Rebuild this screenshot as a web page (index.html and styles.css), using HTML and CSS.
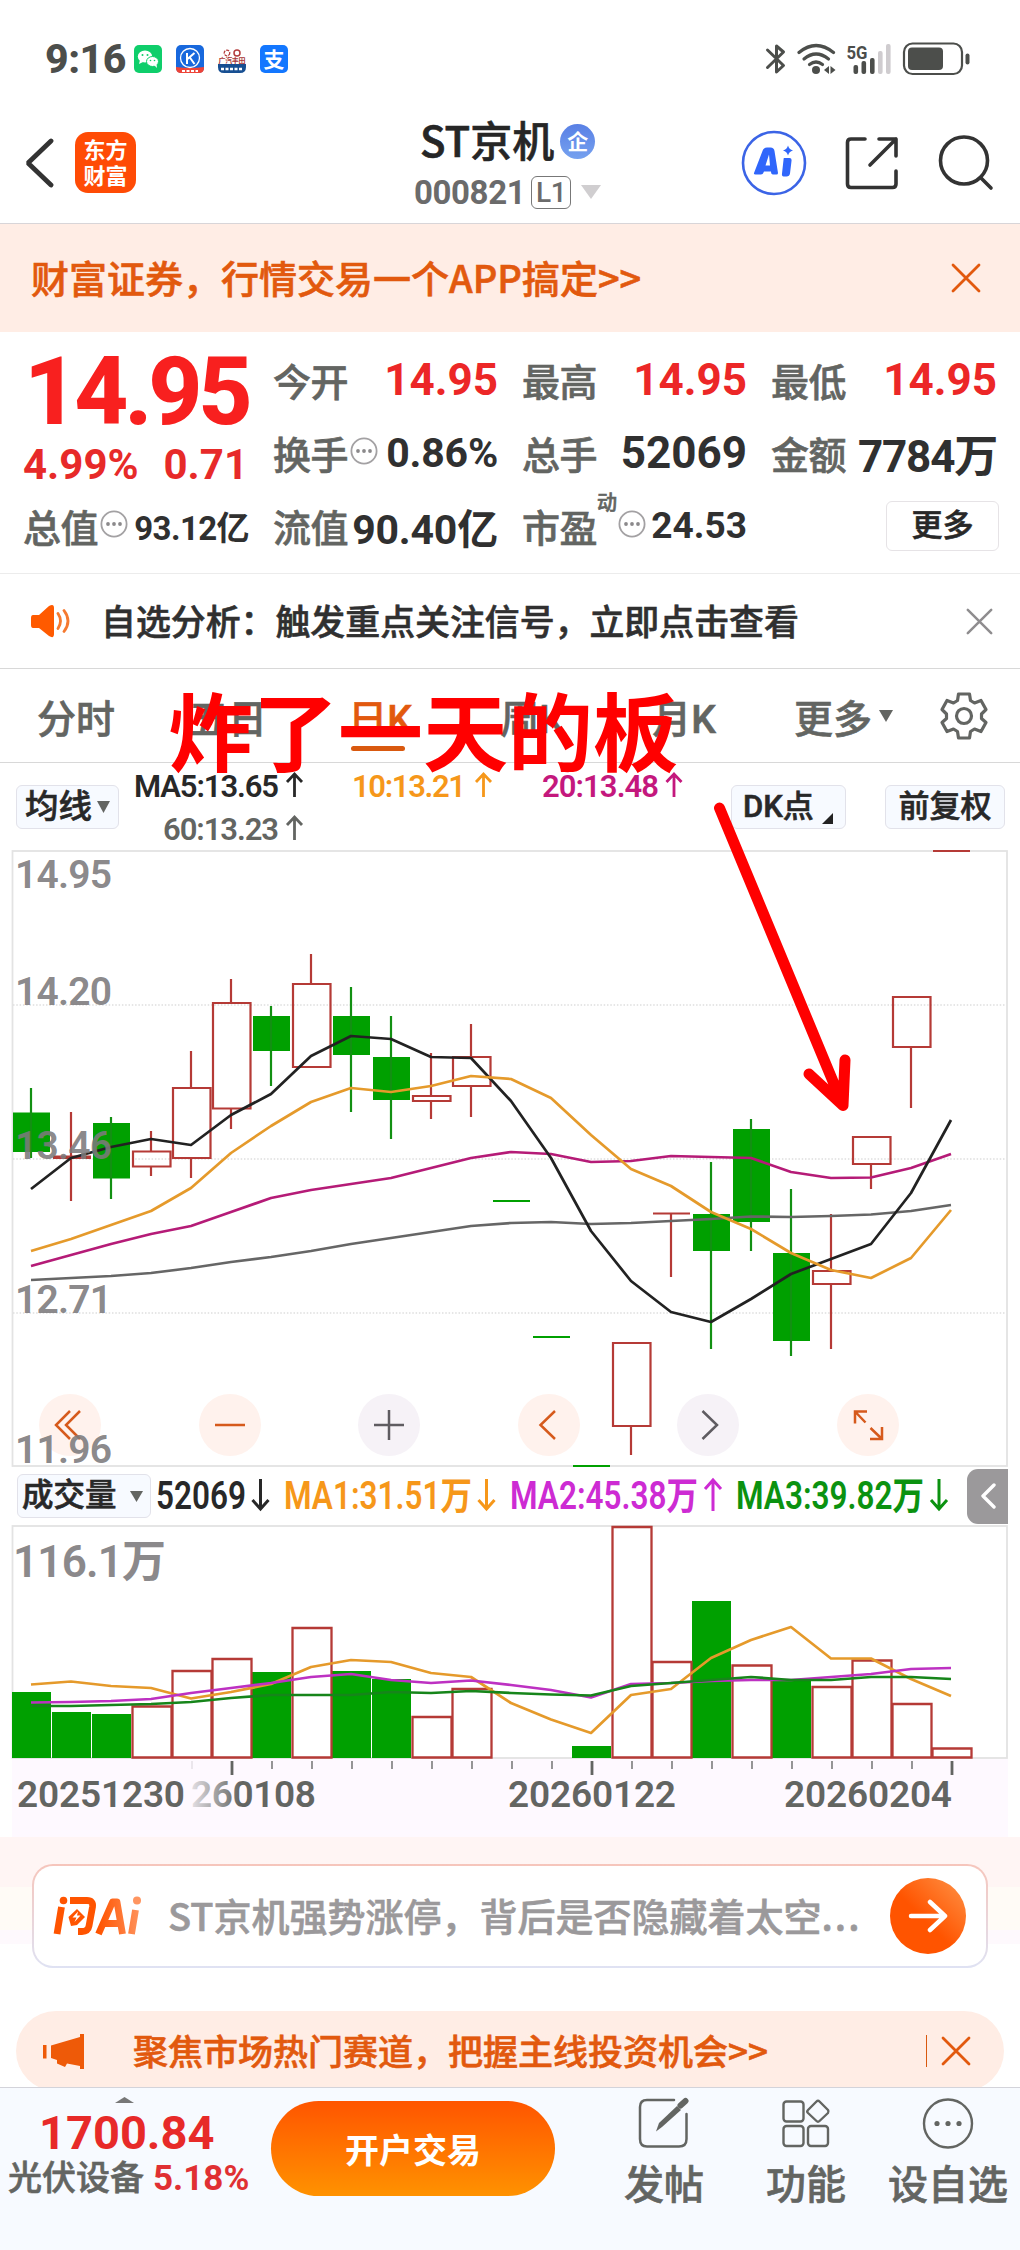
FILE: index.html
```html
<!DOCTYPE html>
<html lang="zh-CN">
<head>
    <meta charset="UTF-8">
    <meta name="viewport" content="width=device-width, initial-scale=1.0">
    <title>ST京机 000821</title>
    <link rel="stylesheet" href="styles.css">
</head>
<body>
    <svg class="defs" width="0" height="0">
        <symbol id="dots" viewBox="0 0 28 28">
            <circle cx="14" cy="14" r="12.6" fill="none" stroke="#a3a1a3" stroke-width="1.8"/>
            <circle cx="8" cy="14" r="1.9" fill="#8b898b"/>
            <circle cx="14" cy="14" r="1.9" fill="#8b898b"/>
            <circle cx="20" cy="14" r="1.9" fill="#8b898b"/>
        </symbol>
        <symbol id="close" viewBox="0 0 30 30">
            <path d="M2 2L28 28M28 2L2 28" fill="none" stroke="currentColor" stroke-width="2.8" stroke-linecap="round"/>
        </symbol>
    </svg>

    <div class="status-bar">
        <span class="time">9:16</span>
        <svg class="apps" width="154" height="28" viewBox="134 45 154 28">
            <rect x="134" y="45" width="28" height="28" rx="5" fill="#0fce6b"/>
            <ellipse cx="145" cy="56.500" rx="7.200" ry="6" fill="#fff"/>
            <path d="M140 60l-1 4 4-2z" fill="#fff"/>
            <ellipse cx="152.500" cy="61.500" rx="6" ry="5" fill="#fff" stroke="#0fce6b" stroke-width="1"/>
            <path d="M154 65l3 3-.5-4z" fill="#fff"/>
            <g fill="#0fce6b"><circle cx="142.500" cy="55" r="1"/><circle cx="147.500" cy="55" r="1"/><circle cx="150.500" cy="60.500" r=".8"/><circle cx="154.500" cy="60.500" r=".8"/></g>
            <rect x="176" y="45" width="28" height="28" rx="5" fill="#1768dd"/>
            <path d="M176 67q14 2 28 0v1q0 5-5 5h-18q-5 0-5-5z" fill="#ee4438"/>
            <circle cx="190" cy="58" r="9.500" fill="none" stroke="#fff" stroke-width="1.300"/>
            <path d="M187 53v11M194.500 53l-7 6M189.500 57l5 7" fill="none" stroke="#fff" stroke-width="2"/>
            <path d="M182 71h16" stroke="#fff" stroke-width="2" stroke-dasharray="3 1.500"/>
            <path d="M218 64h28v3q0 6-6 6h-16q-6 0-6-6z" fill="#174f92"/>
            <path d="M221 69h21" stroke="#fff" stroke-width="2.500" stroke-dasharray="3 1.500"/>
            <circle cx="227" cy="53" r="2.800" fill="none" stroke="#b33b3b" stroke-width="1.300" stroke-dasharray="3 1"/>
            <circle cx="237" cy="53" r="3" fill="none" stroke="#b33b3b" stroke-width="1.500"/>
            <text x="218.500" y="62.500" class="app-text" fill="#a83434" textLength="27" font-size="7">广汽丰田</text>
            <rect x="260" y="45" width="28" height="28" rx="5" fill="#1377ff"/>
            <text x="274" y="67" class="app-text" fill="#fff" text-anchor="middle" font-size="21">支</text>
        </svg>
        <svg class="signals" width="206" height="34" viewBox="765 42 206 34">
            <path d="M767.500 50L783.500 65.500 776.500 72V46L783.500 52 767.500 67.500" fill="none" stroke="#4c4e4b" stroke-width="3" stroke-linejoin="round" stroke-linecap="round"/>
            <g fill="none" stroke="#4c4e4b" stroke-width="3.200" stroke-linecap="round">
                <path d="M799 52.500Q816 38.500 833.500 52.500"/>
                <path d="M804 59Q816 49 828.500 59"/>
                <path d="M809.500 64.500Q816 59.500 822.500 64.500"/>
            </g>
            <circle cx="816" cy="70" r="4" fill="#4c4e4b"/>
            <path d="M829 66v8l-5-4zM830.500 66l5 4-5 4z" fill="#4c4e4b"/>
            <text x="846.500" y="59" class="net" textLength="21" lengthAdjust="spacingAndGlyphs">5G</text>
            <g fill="#4c4e4b">
                <rect x="853.500" y="65" width="4.600" height="9" rx="2"/>
                <rect x="861.500" y="61" width="4.600" height="13" rx="2"/>
                <rect x="870" y="58" width="4.600" height="16" rx="2"/>
            </g>
            <g fill="#cfcccf">
                <rect x="878" y="51" width="4.600" height="23" rx="2"/>
                <rect x="886" y="44" width="4.600" height="30" rx="2"/>
            </g>
            <rect x="904" y="43.500" width="58" height="30.500" rx="8.500" fill="none" stroke="#4c4e4b" stroke-width="2.200"/>
            <rect x="908" y="47.500" width="35" height="22.500" rx="4" fill="#4c4e4b"/>
            <rect x="965.500" y="53.500" width="4" height="11" rx="2" fill="#4c4e4b"/>
        </svg>
    </div>

    <header class="header">
        <div class="header-left">
            <svg width="30" height="50" viewBox="0 0 30 50"><path d="M27 3L4 25 27 47" fill="none" stroke="#333" stroke-width="4.800" stroke-linecap="round" stroke-linejoin="bevel"/></svg>
            <div class="logo">东方<br>财富</div>
        </div>
        <div class="header-title">
            <div class="name">ST京机<span class="badge">企</span></div>
            <div class="code">000821<span class="level">L1</span>
                <svg width="20" height="14" viewBox="0 0 20 14"><path d="M0 0h20L10 14z" fill="#d0ced0"/></svg>
            </div>
        </div>
        <div class="header-icons">
            <svg width="66" height="66" viewBox="741.500 129.500 66 66">
                <circle cx="774.500" cy="162.500" r="31" fill="none" stroke="#3b64e6" stroke-width="2.600"/>
                <path fill="#3066fb" fill-rule="evenodd" d="M754.500 172.500L763 150.500Q764 147 767.500 147H771Q774.500 147 775 150.500L778.500 172.500Q778.500 174 777 174H773.500Q771.500 174 771.500 171H764.500Q763.500 174 761.500 174H756Q754 174 754.500 172.500zM769.500 154L766 165H770.500zM784.500 157.500H790Q792.500 157.500 792 160.500L790.500 173Q790 176 787 176H784Q782 176 782.500 173L784 159.500Q784 157.500 784.500 157.500z"/>
                <path d="M788.500 145q1 4 5 5-4 1-5 5-1-4-5-5 4-1 5-5z" fill="#3066fb"/>
            </svg>
            <svg width="56" height="56" viewBox="845 134 56 56" fill="none" stroke="#333" stroke-width="3.600" stroke-linecap="round" stroke-linejoin="round">
                <path d="M866 138H852Q848.500 138 848.500 141.500V183Q848.500 186.500 852 186.500H893.500Q897 186.500 897 183V170"/>
                <path d="M880 138H897V155M897 138L871 164"/>
            </svg>
            <svg width="58" height="58" viewBox="938 133 58 58" fill="none" stroke="#333" stroke-width="3.600" stroke-linecap="round">
                <circle cx="965" cy="159.500" r="23.500"/>
                <path d="M982 177L992 187"/>
            </svg>
        </div>
    </header>

    <div class="promo">
        <span>财富证券，行情交易一个APP搞定&gt;&gt;</span>
        <svg width="30" height="30"><use href="#close"/></svg>
    </div>

    <section class="quote">
        <div class="quote-main">
            <div class="price">14.95</div>
            <div class="change"><span>4.99%</span><span>0.71</span></div>
            <div class="cell"><label>总值</label><svg width="28" height="28"><use href="#dots"/></svg><b class="xs">93.12亿</b></div>
        </div>
        <div class="quote-col">
            <div class="cell"><label>今开</label><b class="up">14.95</b></div>
            <div class="cell"><label>换手</label><svg width="28" height="28"><use href="#dots"/></svg><b class="md">0.86%</b></div>
            <div class="cell"><label>流值</label><b class="md">90.40亿</b></div>
        </div>
        <div class="quote-col">
            <div class="cell"><label>最高</label><b class="up">14.95</b></div>
            <div class="cell"><label>总手</label><b>52069</b></div>
            <div class="cell"><label>市盈<sup>动</sup></label><svg width="28" height="28"><use href="#dots"/></svg><b class="sm">24.53</b></div>
        </div>
        <div class="quote-col">
            <div class="cell"><label>最低</label><b class="up">14.95</b></div>
            <div class="cell"><label>金额</label><b class="amount">7784万</b></div>
            <div class="cell"><button class="more-btn">更多</button></div>
        </div>
    </section>

    <div class="notice">
        <svg width="40" height="34" viewBox="30 603 40 34">
            <path d="M33 614H39L49 605Q54 602 54 607V633Q54 638 49 635L39 627H33Q31 627 31 624V617Q31 614 33 614z" fill="#ff5a00"/>
            <path d="M58 612.500Q63 620 58 627.500M64 609.500Q72 620 64 630.500" fill="none" stroke="#f5792f" stroke-width="2.800" stroke-linecap="round"/>
        </svg>
        <span>自选分析：触发重点关注信号，立即点击查看</span>
        <svg class="notice-close" width="27" height="27"><use href="#close"/></svg>
    </div>

    <nav class="tabs">
        <div class="tab">分时</div>
        <div class="tab">五日</div>
        <div class="tab active">日K</div>
        <div class="tab">周K</div>
        <div class="tab">月K</div>
        <div class="tab-more">更多<svg width="14" height="12" viewBox="0 0 14 12"><path d="M0 0h14L7 12z" fill="#636562"/></svg></div>
        <svg class="gear" width="50" height="50" viewBox="-25 -25 50 50" fill="none" stroke="#636562" stroke-width="3.200" stroke-linejoin="round">
            <path d="M-5.500-22H5.500L6.500-15.500 10.500-13 17-15.500 22-6.500 17.500-2V2.500L22 6.500 17 15.500 10.500 13 6.500 15.500 5.500 22H-5.500L-6.500 15.500-10.500 13-17 15.500-22 6.500-17.500 2.500V-2L-22-6.500-17-15.500-10.500-13-6.500-15.500z"/>
            <circle r="7.500"/>
        </svg>
    </nav>

    <div class="ma-bar">
        <button class="chip ma-chip">均线<svg width="13" height="12" viewBox="0 0 13 12"><path d="M0 0h13L6.500 12z" fill="#636562"/></svg></button>
        <svg class="ma-values" width="560" height="87" viewBox="130 763 560 87">
            <g class="num">
                <text x="134" y="797" textLength="145" fill="#282828">MA5:13.65</text>
                <text x="352" y="797" textLength="114" fill="#f6971a">10:13.21</text>
                <text x="542" y="797" textLength="117" fill="#c4187d">20:13.48</text>
                <text x="163" y="840" textLength="116" fill="#636562">60:13.23</text>
            </g>
            <g fill="none" stroke-width="2.800">
                <path d="M294.500 797V775M287 782L294.500 774 302 782" stroke="#282828"/>
                <path d="M483.500 797V775M476 782L483.500 774 491 782" stroke="#f6971a"/>
                <path d="M674 797V775M666.500 782L674 774 681.500 782" stroke="#c4187d"/>
                <path d="M294.500 840V818M287 825L294.500 817 302 825" stroke="#636562"/>
            </g>
        </svg>
        <button class="chip dk-chip">DK点<svg width="11" height="11" viewBox="0 0 11 11"><path d="M11 0v11H0z" fill="#222"/></svg></button>
        <button class="chip fq-chip">前复权</button>
    </div>

    <svg class="kline" width="1020" height="618" viewBox="0 850 1020 618">
        <rect x="12.500" y="851" width="994.500" height="615" fill="none" stroke="#e3e3e3" stroke-width="1.800"/>
        <path d="M13 1005H1006M13 1159H1006M13 1313H1006" stroke="#dedede" stroke-width="1.300" stroke-dasharray="1.500 1.800"/>

        <!-- falling candles -->
        <path fill="#00a000" d="M13 1112.500h37v39.500h-37zM93 1123h37v55.500h-37zM253 1016h37v35h-37zM333 1016h37v39h-37zM373 1057h37v43h-37zM493 1200h37v2h-37zM533 1336h37v2h-37zM573 1465h37v2h-37zM693 1214h37v37h-37zM733 1129h37v93h-37zM773 1253h37v88h-37z"/>
        <path stroke="#129012" stroke-width="2.200" d="M31 1088V1158M111 1117V1199M271 1006V1086M351 987V1112M391 1016V1139M711 1162V1349M751 1119V1251M791 1189V1356"/>

        <!-- rising candles -->
        <g fill="none" stroke="#b53a36" stroke-width="2.200">
            <path d="M53 1156.500h38M653 1213.500h37M933 851h37"/>
            <path d="M53 1158h38"/>
            <path d="M133 1151.500h37.500v15h-37.500zM173 1088h37.500v70h-37.500zM213 1003h37.500v105.500h-37.500zM293 984h37.500v83h-37.500zM413 1096h37.500v5h-37.500zM453 1057h37.500v29h-37.500zM613 1343h37.500v83h-37.500zM813 1271h37.500v13h-37.500zM853 1137h37.500v27h-37.500zM893 997h37.500v50h-37.500z"/>
            <path d="M71 1112V1201M151 1131V1151M151 1167V1176M191 1051V1088M191 1158V1178M231 979V1003M231 1109V1129M311 954V984M431 1053V1096M431 1101V1119M471 1024V1057M471 1086V1117M631 1426V1455M671 1214V1277M831 1214V1271M831 1284V1349M871 1164V1189M911 1047V1108"/>
        </g>

        <!-- moving averages -->
        <g fill="none" stroke-width="2.700" stroke-linejoin="round">
            <polyline stroke="#666" points="31,1280 71,1278 111,1276 151,1273 191,1268 231,1262 271,1257 311,1251 351,1244 391,1238 431,1232 471,1226 511,1223 551,1222 591,1224 631,1223 671,1221 711,1219 751,1216.500 791,1217 831,1216 871,1214.500 911,1211 951,1205"/>
            <polyline stroke="#b51b77" points="31,1266 71,1255 111,1244 151,1234 191,1226 231,1212 271,1198 311,1190 351,1184 391,1178 431,1168 471,1158 511,1152 551,1154 591,1162 631,1161 671,1156 711,1157 751,1158 791,1172 831,1178 871,1177.500 911,1168 951,1154"/>
            <polyline stroke="#222" points="31,1189 71,1158 111,1147 151,1139 191,1145 231,1115 271,1094 311,1056 351,1036 391,1039 431,1057 471,1058 511,1101 551,1158 591,1231 631,1281 671,1312 711,1322 751,1299 791,1274 831,1259 871,1244 911,1193 951,1120"/>
            <polyline stroke="#e59a2b" points="31,1251 71,1239 111,1225 151,1211 191,1188 231,1153 271,1126 311,1102 351,1088 391,1092 431,1086 471,1076 511,1079 551,1098 591,1135 631,1169 671,1186 711,1212 751,1229 791,1253 831,1270 871,1278 911,1258 951,1210"/>
        </g>

        <!-- chart controls -->
        <g fill="#fff2ed">
            <circle cx="70" cy="1425" r="31"/><circle cx="230" cy="1425" r="31"/>
            <circle cx="549" cy="1425" r="31"/><circle cx="868" cy="1425" r="31"/>
        </g>
        <g fill="#f6f2f7"><circle cx="389" cy="1425" r="31"/><circle cx="708" cy="1425" r="31"/></g>
        <g fill="none" stroke="#d65a1c" stroke-width="2.500">
            <path d="M70 1411L56 1425 70 1439M80 1411L66 1425 80 1439M215 1425H245M555 1411L540.500 1425 555 1439"/>
            <path d="M855 1423.500V1411.500H867M855 1411.500L865.500 1422.500M870.500 1428L882 1439M882 1427V1439H870"/>
        </g>
        <path d="M374 1425H404M389 1410V1440M702.500 1411L717 1425 702.500 1439" fill="none" stroke="#5f5c61" stroke-width="2.500"/>

        <g class="axis">
            <text x="15" y="888" textLength="97">14.95</text>
            <text x="15" y="1005" textLength="97">14.20</text>
            <text x="15" y="1158.500" textLength="97">13.46</text>
            <text x="15" y="1313" textLength="97">12.71</text>
            <text x="15" y="1463" textLength="97">11.96</text>
        </g>
    </svg>

    <div class="vol-bar">
        <button class="chip vol-chip">成交量<svg width="13" height="11" viewBox="0 0 13 11"><path d="M0 0h13L6.500 11z" fill="#636562"/></svg></button>
        <svg class="vol-values" width="800" height="56" viewBox="155 1468 800 56">
            <g class="num">
                <text x="156" y="1509" textLength="90" lengthAdjust="spacingAndGlyphs" fill="#282828">52069</text>
                <text x="284" y="1509" textLength="188" lengthAdjust="spacingAndGlyphs" fill="#f6971a">MA1:31.51万</text>
                <text x="510" y="1509" textLength="188" lengthAdjust="spacingAndGlyphs" fill="#cd2bd3">MA2:45.38万</text>
                <text x="736" y="1509" textLength="188" lengthAdjust="spacingAndGlyphs" fill="#0b9210">MA3:39.82万</text>
            </g>
            <g fill="none" stroke-width="3">
                <path d="M260.500 1479V1508M252.500 1500L260.500 1509 268.500 1500" stroke="#282828"/>
                <path d="M486.500 1479V1508M478.500 1500L486.500 1509 494.500 1500" stroke="#f6971a"/>
                <path d="M713 1511V1481M705 1489L713 1480 721 1489" stroke="#cd2bd3"/>
                <path d="M939 1479V1508M931 1500L939 1509 947 1500" stroke="#0b9210"/>
            </g>
        </svg>
        <div class="drawer">
            <svg width="16" height="26" viewBox="0 0 16 26"><path d="M14 2L3 13 14 24" fill="none" stroke="#fff" stroke-width="3.400" stroke-linecap="round" stroke-linejoin="round"/></svg>
        </div>
    </div>

    <svg class="volume" width="1020" height="313" viewBox="0 1524 1020 313">
        <defs>
            <linearGradient id="fade" gradientUnits="userSpaceOnUse" x1="190" y1="0" x2="240" y2="0">
                <stop offset="0" stop-color="#636562" stop-opacity=".15"/>
                <stop offset="1" stop-color="#636562"/>
            </linearGradient>
        </defs>
        <rect x="12" y="1759" width="996" height="78" fill="#fef9ff"/>
        <rect x="12.500" y="1526" width="994.500" height="232" fill="#fff" stroke="#e3e3e3" stroke-width="1.800"/>

        <path fill="#00a000" d="M12 1692h39v66h-39zM52 1712h39v46h-39zM92 1714h39v44h-39zM252 1672h39v86h-39zM332 1671h39v87h-39zM372 1679h39v79h-39zM572 1746h39v12h-39zM692 1601h39v157h-39zM772 1680h39v78h-39z"/>
        <path fill="none" stroke="#b53a36" stroke-width="2.300" d="M132.500 1706.500h39v51h-39zM172.500 1671h39v86.500h-39zM212.500 1659h39v98.500h-39zM292.500 1628h39v129.500h-39zM412.500 1717h39v40.500h-39zM452.500 1689h39v68.500h-39zM612.500 1527h39v230.500h-39zM652.500 1662h39v95.500h-39zM732.500 1665.500h39v92h-39zM812.500 1687h39v70.500h-39zM852.500 1660.500h39v97h-39zM892.500 1704h39v53.500h-39zM932.500 1748.500h39v9h-39z"/>

        <g fill="none" stroke-width="2.700" stroke-linejoin="round">
            <polyline stroke="#e59a2b" points="31,1684.500 71,1681.500 111,1686 151,1688 191,1698.500 231,1692 271,1684 311,1667 351,1660 391,1662 431,1673 471,1677 511,1703 551,1719.500 591,1733 631,1695 671,1689 711,1658 751,1640 791,1627 831,1658.500 871,1658.500 911,1679 951,1696"/>
            <polyline stroke="#bd31c2" points="31,1702.500 71,1702 111,1701 151,1699 191,1693 231,1688 271,1683 311,1677 351,1674 391,1680 431,1683 471,1680.500 511,1685 551,1690 591,1697.500 631,1684 671,1683 711,1681 751,1680 791,1680 831,1677 871,1674 911,1669 951,1668"/>
            <polyline stroke="#16851a" points="31,1706 71,1706 111,1705 151,1704 191,1702 231,1698 271,1695 311,1695 351,1695 391,1692 431,1693 471,1691 511,1693 551,1694.500 591,1695.500 631,1686 671,1683 711,1680 751,1677 791,1680 831,1680 871,1677 911,1677 951,1679"/>
        </g>

        <path stroke="#8b898b" stroke-width="1.800" d="M272 1761v8M312 1761v8M352 1761v8M392 1761v8M432 1761v8M472 1761v8M512 1761v8M552 1761v8M632 1761v8M672 1761v8M712 1761v8M752 1761v8M792 1761v8M832 1761v8M872 1761v8M912 1761v8"/>
        <path stroke="#636562" stroke-width="2.800" d="M232 1761v14M592 1761v14M952 1761v14"/>
        <path stroke="#e6e1e8" stroke-width="1.600" d="M192 1761v8"/>

        <text class="vol-max" x="13" y="1576.500" textLength="153">116.1万</text>
        <g class="date">
            <text x="17" y="1807" textLength="168">20251230</text>
            <text x="191" y="1807" textLength="125" fill="url(#fade)">260108</text>
            <text x="508" y="1807" textLength="168">20260122</text>
            <text x="784" y="1807" textLength="168">20260204</text>
        </g>
    </svg>

    <section class="ask">
        <div class="ask-box">
            <svg width="96" height="46" viewBox="50 1893 96 46">
                <defs>
                    <linearGradient id="askFill" gradientUnits="userSpaceOnUse" x1="54" y1="0" x2="142" y2="0">
                        <stop offset=".5" stop-color="#ff5400"/>
                        <stop offset="1" stop-color="#ff9560"/>
                    </linearGradient>
                </defs>
                <g fill="none" stroke="url(#askFill)" stroke-width="6.800" stroke-linejoin="round">
                    <path d="M61.500 1907L57 1934M70 1900.500H87Q93.500 1900.500 92.500 1907L89 1926Q88 1931.500 82 1931.500H78"/>
                    <path d="M98.500 1934L112.500 1902H117L122.500 1934M103 1923.500H120M135.500 1910L131.500 1934"/>
                </g>
                <circle cx="63.500" cy="1900.500" r="3.800" fill="#ff5400"/>
                <circle cx="137" cy="1900.500" r="4" fill="#ff9560"/>
                <path d="M77 1909L85 1917 77 1925 71 1926 68.500 1917z" fill="#ff5400"/>
                <path d="M78 1911.500L72.500 1917.500H76.500L74.500 1922 80.500 1915.500H77z" fill="#fff"/>
            </svg>
            <span>ST京机强势涨停，背后是否隐藏着太空<i>...</i></span>
            <div class="send">
                <svg width="40" height="34" viewBox="0 0 40 34"><path d="M3 17H36M22 3L37 17 22 31" fill="none" stroke="#fff" stroke-width="4.500" stroke-linecap="round" stroke-linejoin="round"/></svg>
            </div>
        </div>
    </section>

    <div class="hot-wrap">
        <div class="hot">
            <svg width="44" height="36" viewBox="42 2033 44 36">
                <path d="M43 2045h3.500v13.500H43zM51 2045.500L80 2037V2034H84V2069H80V2066L67 2063.500 65 2067 57 2063.500V2060L51 2058z" fill="#ee5a08"/>
            </svg>
            <span>聚焦市场热门赛道，把握主线投资机会&gt;&gt;</span>
            <div class="hot-line"></div>
            <svg class="hot-close" width="30" height="30"><use href="#close"/></svg>
        </div>
    </div>

    <footer class="footer">
        <div class="sector">
            <svg width="19" height="6" viewBox="0 0 19 6"><path d="M0 6L9.500 0 19 6z" fill="#777"/></svg>
            <div class="sector-value">1700.84</div>
            <div class="sector-name">光伏设备<b>5.18%</b></div>
        </div>
        <button class="open-btn">开户交易</button>
        <div class="action post">
            <svg width="52" height="52" viewBox="638 2097 52 52" fill="none" stroke="#636562" stroke-width="2.500">
                <path d="M674 2100H647Q640 2100 640 2107V2139Q640 2146.500 647 2146.500H679Q686.500 2146.500 686.500 2139V2114" stroke-linecap="round"/>
                <path d="M656 2131.500L659 2123 677 2106 681 2110 662 2127z" fill="#636562" stroke="none"/>
                <path d="M680.500 2105.500L685.500 2101" stroke-width="6" stroke-linecap="round"/>
            </svg>
            <span>发帖</span>
        </div>
        <div class="action func">
            <svg width="52" height="52" viewBox="780 2097 52 52" fill="none" stroke="#636562" stroke-width="2.400" stroke-linejoin="round">
                <rect x="783.500" y="2101.500" width="20" height="20" rx="3"/>
                <rect x="783.500" y="2126" width="20" height="20" rx="3"/>
                <rect x="808" y="2126" width="20" height="20" rx="3"/>
                <path d="M816.500 2101.500Q818 2100 819.500 2101.500L828 2110Q829 2111.500 828 2113L819.500 2121Q818 2122.500 816.500 2121L808 2113Q806.500 2111.500 808 2110z"/>
            </svg>
            <span>功能</span>
        </div>
        <div class="action watch">
            <svg width="52" height="52" viewBox="922.500 2097 52 52">
                <circle cx="948.500" cy="2123.500" r="24" fill="none" stroke="#636562" stroke-width="2.400"/>
                <g fill="#636562"><circle cx="937.500" cy="2123.500" r="2.600"/><circle cx="948.500" cy="2123.500" r="2.600"/><circle cx="959.500" cy="2123.500" r="2.600"/></g>
            </svg>
            <span>设自选</span>
        </div>
    </footer>

    <div class="note">炸了一天的板</div>
    <svg class="note-arrow" width="160" height="330" viewBox="700 795 160 330" fill="none" stroke="#f00" stroke-width="11" stroke-linecap="round" stroke-linejoin="round">
        <path d="M719.500 808L843 1105.500M809 1074L843 1105.500 845 1060"/>
    </svg>
</body>
</html>
```
FILE: styles.css
```css
* {
    box-sizing: border-box;
}

body {
    margin: 0;
    width: 1020px;
    height: 2250px;
    position: relative;
    overflow: hidden;
    background-color: #fff;
    color: #333;
    font-family: Roboto, "Noto Sans CJK SC", sans-serif;
    font-weight: 500;
    white-space: nowrap;
}

svg {
    display: block;
    flex: none;
}

.defs {
    position: absolute;
}

button {
    font-family: inherit;
    font-weight: 500;
    padding: 0;
    border: none;
}

/* slightly heavier chinese text */
.name,
.promo span,
.cell label,
.more-btn,
.notice span,
.tabs,
.chip,
.ask-box span,
.hot span,
.sector-name,
.action span {
    -webkit-text-stroke: 0.6px currentColor;
}

/* status bar */
.status-bar {
    display: flex;
    align-items: center;
    height: 118px;
    padding: 0 49px 0 45px;
}

.time {
    width: 89px;
    font-size: 41px;
    font-weight: 800;
    letter-spacing: -0.5px;
    color: #4c4e4b;
}

.signals {
    margin-left: auto;
}

.app-text {
    font-family: "Noto Sans CJK SC", sans-serif;
    font-weight: 700;
}

.net {
    font-size: 19px;
    font-weight: 700;
    fill: #4c4e4b;
}

/* header */
.header {
    display: grid;
    grid-template-columns: 400px 215px 405px;
    height: 106px;
    border-bottom: 1px solid #d8d5d8;
}

.header-left {
    display: flex;
    align-items: center;
    height: 89px;
    padding-left: 24px;
    gap: 21px;
}

.logo {
    width: 61px;
    height: 61px;
    padding-top: 3px;
    border-radius: 13px;
    background-color: #ff4b05;
    color: #fff;
    font-family: "Noto Sans CJK SC", sans-serif;
    font-size: 22px;
    font-weight: 700;
    line-height: 26px;
    text-align: center;
}

.name {
    display: flex;
    align-items: center;
    height: 47px;
    padding-left: 20px;
    font-family: "Noto Sans CJK SC", sans-serif;
    font-size: 42px;
    line-height: 40px;
    padding-bottom: 6px;
    color: #262626;
}

.badge {
    width: 35px;
    height: 35px;
    margin-left: 6px;
    margin-top: 6px;
    border-radius: 50%;
    background: linear-gradient(#5980e5, #76a1ef);
    color: #fff;
    font-size: 21px;
    font-weight: 700;
    line-height: 33px;
    text-align: center;
    -webkit-text-stroke: 0;
}

.code {
    display: flex;
    align-items: center;
    height: 54px;
    margin-top: 1px;
    padding: 0 0 2px 14px;
    font-size: 33px;
    font-weight: 700;
    letter-spacing: -0.4px;
    color: #6b6b6b;
}

.level {
    width: 40px;
    height: 33px;
    margin: 0 10px 0 6px;
    border: 1.500px solid #777;
    border-radius: 6px;
    font-size: 28px;
    font-weight: 500;
    line-height: 31px;
    text-align: center;
}

.header-icons {
    display: flex;
    align-items: center;
    height: 89px;
    padding-left: 126px;
    gap: 37px;
}

/* promo banner */
.promo {
    display: flex;
    align-items: center;
    justify-content: space-between;
    height: 108px;
    padding: 0 39px 0 31px;
    background-color: #ffede5;
    color: #e2590e;
    font-family: "Noto Sans CJK SC", sans-serif;
    font-size: 38px;
}

.promo span {
    margin-top: -4px;
}

/* quote */
.quote {
    display: grid;
    grid-template-columns: 226px 225px 225px 226px;
    column-gap: 24px;
    height: 242px;
    padding: 11px 0 0 23px;
    border-bottom: 1px solid #ececec;
}

.price {
    height: 95px;
    padding-left: 1px;
    font-size: 94px;
    font-weight: 800;
    line-height: 99px;
    letter-spacing: -4px;
    color: #f8201f;
}

.change {
    display: flex;
    justify-content: space-between;
    height: 51px;
    padding-right: 1px;
    font-size: 42px;
    font-weight: 700;
    line-height: 53px;
    color: #e72a29;
}

.cell {
    display: flex;
    align-items: center;
    height: 73px;
}

.cell label {
    position: relative;
    font-size: 38px;
    color: #636562;
    letter-spacing: -0.5px;
}

.cell sup {
    position: absolute;
    left: 75px;
    top: -5px;
    font-size: 20px;
    line-height: 20px;
}

.cell svg {
    margin-top: -4px;
    margin-left: 2px;
}

.cell b {
    margin-left: auto;
    font-size: 44px;
    font-weight: 700;
    color: #303030;
}

.cell b.up {
    color: #ec2727;
}

.cell b.md {
    font-size: 41px;
    letter-spacing: -0.2px;
}

.cell b.sm {
    font-size: 37px;
}

.cell b.xs {
    font-size: 33px;
    letter-spacing: -0.6px;
}

.cell b.amount {
    letter-spacing: -1.200px;
}

.quote-col:nth-child(3) .cell svg {
    margin-left: 21px;
}

.more-btn {
    width: 113px;
    height: 50px;
    margin-left: auto;
    margin-right: -2px;
    border: 1.500px solid #e6e3e6;
    border-radius: 6px;
    background-color: #fff;
    color: #282828;
    font-size: 31px;
    line-height: 46px;
}

/* notice */
.notice {
    display: flex;
    align-items: center;
    height: 95px;
    padding: 0 27px 0 30px;
    border-bottom: 1px solid #d8d8d8;
    font-size: 34.900px;
    color: #303030;
}

.notice span {
    margin-left: 31px;
    margin-top: -3px;
}

.notice-close {
    margin-left: auto;
    color: #8f8d8f;
}

/* period tabs */
.tabs {
    display: flex;
    align-items: center;
    height: 94px;
    border-bottom: 1px solid #d8d8d8;
    font-size: 39px;
    color: #636562;
}

.tab {
    position: relative;
    width: 152px;
    text-align: center;
}

.tab.active {
    color: #e2590e;
}

.tab.active::after {
    content: "";
    position: absolute;
    left: 47px;
    top: 58px;
    width: 54px;
    height: 5px;
    border-radius: 3px;
    background-color: #d9590f;
}

.tab-more {
    display: flex;
    align-items: center;
    gap: 7px;
    margin-left: 34px;
}

.gear {
    margin-left: 46px;
}

/* moving average legend */
.chip {
    display: flex;
    align-items: center;
    height: 44px;
    border: 1.500px solid #e2e2ea;
    border-radius: 6px;
    background-color: #f7faff;
    color: #282828;
    font-size: 31px;
    line-height: 40px;
}

.ma-bar {
    display: flex;
    align-items: center;
    height: 87px;
    padding-left: 16px;
}

.ma-chip {
    width: 103px;
    padding-left: 8px;
    font-size: 33.500px;
    gap: 5px;
}

.ma-values {
    margin-left: 11px;
}

.num {
    font-size: 31px;
    font-weight: 600;
}

.dk-chip {
    width: 115px;
    margin-left: 41px;
    padding-left: 11px;
    gap: 8px;
}

.dk-chip svg {
    align-self: flex-end;
    margin-bottom: 4px;
}

.fq-chip {
    width: 120px;
    margin-left: 39px;
    justify-content: center;
}

/* charts */
.axis {
    font-size: 39px;
    font-weight: 600;
    fill: #7c7a7c;
    fill-opacity: 0.9;
}

.vol-bar {
    display: flex;
    align-items: center;
    height: 56px;
    padding: 0 12px 0 17px;
}

.vol-chip {
    width: 134px;
    padding-left: 4px;
    font-size: 31.500px;
    gap: 13px;
}

.vol-values {
    margin-left: 4px;
}

.vol-values .num {
    font-size: 38px;
}

.drawer {
    display: flex;
    align-items: center;
    width: 41px;
    height: 55px;
    margin-left: auto;
    padding-left: 13px;
    border-radius: 11px 0 0 11px;
    background-color: #9b999b;
}

.vol-max {
    font-size: 44px;
    font-weight: 600;
    fill: #8b898b;
}

.date {
    font-size: 37px;
    font-weight: 600;
    fill: #636562;
}

/* ask box */
.ask {
    height: 174px;
    padding: 27px 32px 0;
    background: linear-gradient(#fff5f4 50px, #fffbf6 50px, #fffbf6 93px, #fef9fd 93px, #fef9fd 107px, #fff 107px);
}

.ask-box {
    display: flex;
    align-items: center;
    height: 104px;
    padding: 0 20px 0 16px;
    border: 2px solid transparent;
    border-radius: 21px;
    background: linear-gradient(#fff, #fff) padding-box, linear-gradient(#f6c5bb, #dfe2f3) border-box;
    color: #9b999b;
    font-family: "Noto Sans CJK SC", sans-serif;
    font-size: 38px;
}

.ask-box span {
    margin-left: 22px;
    margin-top: -4px;
}

.ask-box i {
    font-style: normal;
    letter-spacing: 2px;
}

.send {
    display: flex;
    align-items: center;
    justify-content: center;
    width: 76px;
    height: 76px;
    margin-left: auto;
    border-radius: 50%;
    background: linear-gradient(45deg, #ff5400 45%, #ff9448);
}

/* hot topic banner */
.hot-wrap {
    height: 76px;
    padding: 0 16px;
    overflow: hidden;
}

.hot {
    display: flex;
    align-items: center;
    height: 80px;
    padding: 0 33px 0 26px;
    border-radius: 40px;
    background-color: #ffede5;
    color: #e2590e;
    font-family: "Noto Sans CJK SC", sans-serif;
    font-size: 35px;
}

.hot span {
    margin-left: 47px;
    margin-top: -4px;
}

.hot-line {
    width: 1px;
    height: 32px;
    margin-left: auto;
    background-color: #d9590f;
}

.hot-close {
    margin-left: 14px;
}

/* bottom bar */
.footer {
    display: flex;
    height: 163px;
    border-top: 1px solid #d3d3da;
    background-color: #f7faff;
    color: #636562;
}

.sector {
    width: 271px;
    padding-top: 9px;
}

.sector svg {
    margin-left: 115px;
}

.sector-value {
    height: 56px;
    padding-left: 39px;
    font-size: 47px;
    font-weight: 700;
    line-height: 60px;
    color: #e72a29;
}

.sector-name {
    padding-left: 8px;
    font-size: 34px;
    line-height: 39px;
}

.sector-name b {
    margin-left: 9px;
    font-size: 35px;
    font-weight: 700;
    color: #e03033;
    -webkit-text-stroke: 0;
}

.open-btn {
    width: 284px;
    height: 95px;
    margin-top: 13px;
    border-radius: 48px;
    background: linear-gradient(#ff5500, #ff9200);
    color: #fff;
    font-size: 34px;
    font-weight: 700;
}

.action {
    display: flex;
    flex-direction: column;
    align-items: center;
    width: 142px;
    padding-top: 9px;
    font-size: 40px;
    line-height: 48px;
}

.action span {
    margin-top: 13px;
}

.post {
    margin-left: 38px;
}

/* annotation drawn over the page */
.note {
    position: absolute;
    left: 168px;
    top: 680px;
    font-family: "Noto Sans CJK SC", sans-serif;
    font-size: 85px;
    font-weight: 700;
    line-height: 96px;
    color: #f00;
}

.note-arrow {
    position: absolute;
    left: 700px;
    top: 795px;
}
```
